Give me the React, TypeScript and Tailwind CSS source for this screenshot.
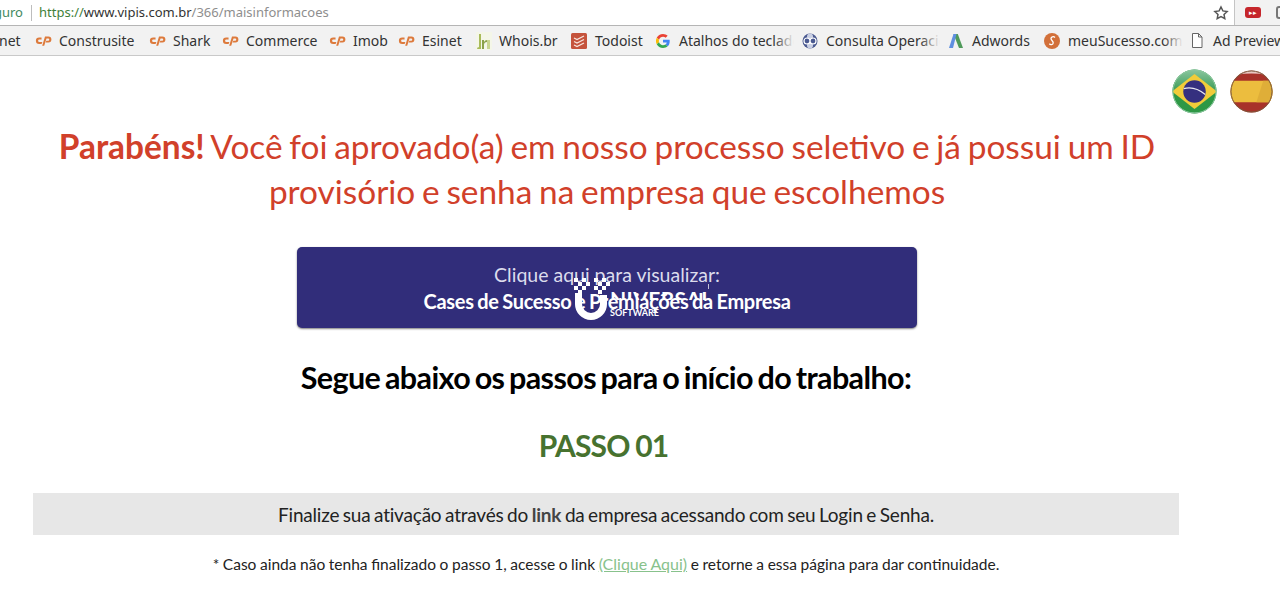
const CPanel = () => (
  <svg width="17" height="12" viewBox="0 0 17 12" className="shrink-0">
    <path d="M6.5 2.500H4.200a3.200 3.200 0 0 0 0 6.600h2.400l.8-2H4.400a1.200 1.200 0 0 1 0-2.600h2.200z" fill="#dd7a3c" />
    <path d="M7.200 10.800 10 1.600h3.400a3 3 0 0 1 0 6H10.700l.6-1.900h1.900a1 1 0 0 0 0-2.100h-1.700l-2.300 7.200z" fill="#dd7a3c" />
  </svg>
);

const Whois = () => (
  <svg width="16" height="18" viewBox="0 0 16 18" className="shrink-0">
    <rect width="16" height="18" fill="#f4f6e8" />
    <path d="M3 17V2h2v15zM1 17a2 2 0 0 1 4 0z" fill="#a9bb5a" />
    <path d="M6 14V8h2v2q1-2 3-2v2q-3 0-3 3v4H6z" fill="#8ba24a" />
    <rect x="11" y="8" width="3" height="9" fill="#c9d58f" />
  </svg>
);

const Todoist = () => (
  <svg width="16" height="16" viewBox="0 0 16 16" className="shrink-0">
    <rect width="16" height="16" rx="1.500" fill="#c5533c" />
    <path d="M3 5l3 1.500L13 3M3 8.500l3 1.500 7-3.500M3 12l3 1.500 7-3.500" stroke="#f8e3dc" strokeWidth="1.300" fill="none" />
  </svg>
);

const Google = () => (
  <svg width="14" height="14" viewBox="0 0 48 48" className="shrink-0">
    <path fill="#EA4335" d="M24 9.500c3.500 0 6.700 1.300 9.100 3.500l6.800-6.800C35.800 2.400 30.200 0 24 0 14.600 0 6.500 5.400 2.600 13.200l7.900 6.200C12.400 13.600 17.700 9.500 24 9.500z" />
    <path fill="#4285F4" d="M47 24.500c0-1.600-.1-3.100-.4-4.500H24v9h12.900c-.6 3-2.200 5.500-4.700 7.200l7.700 6C44.400 38 47 31.800 47 24.500z" />
    <path fill="#FBBC05" d="M10.500 28.600a14.500 14.500 0 0 1 0-9.200l-7.900-6.200a24 24 0 0 0 0 21.600z" />
    <path fill="#34A853" d="M24 48c6.500 0 11.900-2.100 15.900-5.800l-7.700-6c-2.200 1.400-4.900 2.300-8.200 2.300-6.300 0-11.600-4.100-13.500-9.900l-7.900 6.200C6.500 42.600 14.600 48 24 48z" />
  </svg>
);

const Consulta = () => (
  <svg width="16" height="16" viewBox="0 0 16 16" className="shrink-0">
    <circle cx="8" cy="8" r="7.500" fill="#4a5990" />
    <circle cx="8" cy="3.500" r="3" fill="#c9cfe3" />
    <circle cx="8" cy="12.500" r="3" fill="#c9cfe3" />
    <path d="M2 8a3 3 0 0 1 6 0 3 3 0 0 0 6 0M2 8a3 3 0 0 0 6 0 3 3 0 0 1 6 0" stroke="#fff" strokeWidth="1.200" fill="none" />
  </svg>
);

const Adwords = () => (
  <svg width="16" height="16" viewBox="0 0 16 16" className="shrink-0">
    <path d="M5.500 1h4.300l5.200 14h-4z" fill="#4f9a5a" />
    <path d="M5.500 1h3L5 15H1z" fill="#5f8fe0" />
  </svg>
);

const MeuSucesso = () => (
  <svg width="16" height="16" viewBox="0 0 16 16" className="shrink-0">
    <circle cx="8" cy="8" r="8" fill="#d2703a" />
    <path d="M11 4.500C9.500 3 7 3.800 7 5.500c0 2 2.500 2.500 2.200 4.500-.3 1.800-2.700 2-3.900.8" stroke="#fff" strokeWidth="1.300" fill="none" />
  </svg>
);

const PageIcon = () => (
  <svg width="12" height="15" viewBox="0 0 12 15" className="shrink-0">
    <path d="M1.500.5h6l3.500 3.500v10.500h-9.500zM7.500.5V4H11" fill="#fff" stroke="#666" strokeWidth="1" />
  </svg>
);

const Brasil = () => (
  <svg width="45" height="45" viewBox="0 0 46 46">
    <defs>
      <clipPath id="br"><circle cx="23" cy="23" r="22.500" /></clipPath>
      <linearGradient id="brTop" x1="0" y1="0" x2="0" y2="1">
        <stop offset="0" stopColor="#8cc7a0" />
        <stop offset="1" stopColor="#3d9c58" />
      </linearGradient>
    </defs>
    <g clipPath="url(#br)">
      <rect width="46" height="46" fill="#2e9845" />
      <rect width="46" height="22" fill="url(#brTop)" />
      <path d="M23 5 46 23 23 41 0 23z" fill="#f1cc3a" />
      <circle cx="23" cy="23" r="11.500" fill="#35307f" />
      <path d="M12 20q11-3 22 6" stroke="#e8e8f2" strokeWidth="1.200" fill="none" />
      <path d="M7 41q16 7 32 0v5H7z" fill="#79bb8c" />
    </g>
    <circle cx="23" cy="23" r="22" fill="none" stroke="#8cc7a0" strokeWidth="1" />
  </svg>
);

const Espanha = () => (
  <svg width="43" height="43" viewBox="0 0 44 44" className="mt-px">
    <defs>
      <clipPath id="es"><circle cx="22" cy="22" r="21.500" /></clipPath>
    </defs>
    <g clipPath="url(#es)">
      <rect width="44" height="44" fill="#a8322a" />
      <rect y="11" width="44" height="22" fill="#ecbd3e" />
      <path d="M34 11h10v22H27z" fill="#dfae38" />
      <path d="M6 5q16-9 32 0-16-3-32 0z" fill="#e8c7c2" />
    </g>
    <circle cx="22" cy="22" r="21" fill="none" stroke="#7b5a3c" strokeWidth="1" />
  </svg>
);

const bookmarks = [
  { icon: <CPanel />, label: "Construsite", w: "w-[114px]" },
  { icon: <CPanel />, label: "Shark", w: "w-[73px]" },
  { icon: <CPanel />, label: "Commerce", w: "w-[107px]" },
  { icon: <CPanel />, label: "Imob", w: "w-[69px]" },
  { icon: <CPanel />, label: "Esinet", w: "w-[78px]" },
  { icon: <Whois />, label: "Whois.br", w: "w-[95px]" },
  { icon: <Todoist />, label: "Todoist", w: "w-[85px]", gap: "gap-[8px]" },
  { icon: <Google />, label: "Atalhos do teclado", w: "w-[146px]", gap: "gap-[9px]", fade: true },
  { icon: <Consulta />, label: "Consulta Operacional", w: "w-[146px]", gap: "gap-[8px]", fade: true },
  { icon: <Adwords />, label: "Adwords", w: "w-[96px]", gap: "gap-[8px]" },
  { icon: <MeuSucesso />, label: "meuSucesso.com", w: "w-[147px]", gap: "gap-[8px]", fade: true },
  { icon: <PageIcon />, label: "Ad Preview", w: "w-[100px]", gap: "gap-[10px]" },
];

export default function App() {
  return (
    <div className="h-[597px] w-[1280px] overflow-hidden bg-white font-['Lato',sans-serif]">
      {/* browser chrome */}
      <div className="flex h-[26px] items-center border-b border-[#b5b5b5] bg-white font-['Noto_Sans',sans-serif] text-[13px] text-[#8e8e8e]">
        <span className="flex w-[23px] justify-end overflow-hidden text-[#3f8a5f]">
          <span className="shrink-0">guro</span>
        </span>
        <span className="ml-2 mr-[7px] h-4 w-px bg-[#bdbdbd]" />
        <span className="text-[#3f7f3a]">https://</span>
        <span className="text-[#333]">www.vipis.com.br</span>
        <span>/366/maisinformacoes</span>
        <svg width="16" height="16" viewBox="0 0 24 24" fill="none" stroke="#555" strokeWidth="2.200" className="ml-auto mr-[5px]">
          <path d="m12 3 2.800 5.900 6.400.8-4.700 4.400 1.200 6.400L12 17.400l-5.700 3.100 1.200-6.400-4.700-4.400 6.400-.8z" />
        </svg>
        <div className="flex h-full w-[46px] items-center gap-[15px] border-l border-[#c4c4c4] bg-[#f2f2f2] pl-[10px]">
          <span className="flex h-[11px] w-4 shrink-0 items-center justify-center rounded-[3px] bg-[#c5262b] text-[7px] leading-none text-white">▸▸</span>
          <span className="h-[13px] w-4 shrink-0 rounded-[3px] border-2 border-[#777]" />
        </div>
      </div>
      <div className="flex h-[30px] items-center overflow-hidden border-b border-[#c9c9c9] bg-[#f2f2f2] font-['Noto_Sans',sans-serif] text-[14px] text-[#333]">
        <span className="w-[35px] shrink-0">
          <span className="-ml-[1px]">net</span>
        </span>
        {bookmarks.map((b) => (
          <div key={b.label} className={`relative flex shrink-0 items-center overflow-hidden whitespace-nowrap ${b.gap ?? "gap-[7px]"} ${b.w}`}>
            {b.icon}
            <span>{b.label}</span>
            {b.fade && <span className="absolute inset-y-0 right-2 w-5 bg-gradient-to-r from-transparent to-[#f2f2f2]" />}
            {b.fade && <span className="absolute inset-y-0 right-0 w-2 bg-[#f2f2f2]" />}
          </div>
        ))}
      </div>

      {/* page */}
      <div className="w-[1212px]">
        <div className="-mr-[61px] flex justify-end gap-[13px] pt-[13px]">
          <Brasil />
          <Espanha />
        </div>
        <h1 className="mx-auto mt-[10px] w-[1112px] pl-[2px] text-center text-[33.400px] leading-[45px] text-[#d1402a] [word-spacing:-1.800px]">
          <b className="font-bold">Parabéns!</b> Você foi aprovado(a) em nosso processo seletivo e já possui um ID provisório e senha na empresa que escolhemos
        </h1>
        <div className="relative ml-[297px] mt-[33px] flex h-[81px] w-[620px] flex-col items-center justify-center rounded-[5px] bg-[#312d7a] text-white shadow-[0_1px_2px_rgba(0,0,0,0.5)]">
          <p className="text-[19.500px] leading-[26px] text-[#dcdcec]">Clique aqui para visualizar:</p>
          <p className="text-[20px] font-bold leading-[26px] tracking-[-0.3px] [word-spacing:-1px]">Cases de Sucesso e Premiações da Empresa</p>
          {/* logo overlay */}
          <div className="absolute left-[277px] top-[31px] flex items-start">
            <svg width="36" height="42" viewBox="0 0 36 42">
              <path d="M1 15v11a16 16 0 0 0 32 0v-9h-7v9a9 9 0 0 1-18 0V15z" fill="#fff" />
              <path d="M0 0h4v4H0zM8 0h4v4H8zM4 4h4v4H4zM12 4h4v4h-4zM0 8h4v4H0zM8 8h4v4H8zM4 12h4v4H4zM20 0h4v4h-4zM28 0h4v4h-4zM24 4h4v4h-4zM32 4h4v4h-4zM20 8h4v4h-4zM28 8h4v4h-4zM24 12h4v4h-4z" fill="#fff" />
            </svg>
            <div className="mt-[11px] flex flex-col items-start">
              <span className="text-[21px] font-bold leading-[20px] tracking-[0.4px] text-white [clip-path:inset(0_0_45%_0)]">NIVERSAL</span>
              <span className="-mt-[1px] text-[9px] font-bold leading-[9px] text-white">SOFTWARE</span>
            </div>
          </div>
          <span className="absolute left-[411px] top-[37px] h-[5px] w-px bg-white/70" />
        </div>
        <h2 className="mt-[29px] text-center text-[30.500px] font-bold leading-[40px] tracking-[-0.6px] text-black [word-spacing:-2.200px]">
          Segue abaixo os passos para o início do trabalho:
        </h2>
        <h3 className="mt-[28px] pr-[5px] text-center text-[30px] font-bold leading-[40px] tracking-[-0.8px] text-[#47722f] [word-spacing:-1px]">PASSO 01</h3>
        <div className="ml-[33px] mt-[28px] w-[1146px] bg-[#e7e7e7] pb-[8px] pt-[10px] text-center text-[19px] leading-[24px] tracking-[-0.2px] text-[#222] [word-spacing:-1.100px]">
          Finalize sua ativação através do <b className="font-bold text-[#444]">link</b> da empresa acessando com seu Login e Senha.
        </div>
        <p className="mt-[18px] text-center text-[15.500px] leading-[22px] text-[#222] [word-spacing:-0.350px]">
          * Caso ainda não tenha finalizado o passo 1, acesse o link <span className="text-[16px] text-[#88c28c] underline">(Clique Aqui)</span> e retorne a essa página para dar continuidade.
        </p>
      </div>
    </div>
  );
}
